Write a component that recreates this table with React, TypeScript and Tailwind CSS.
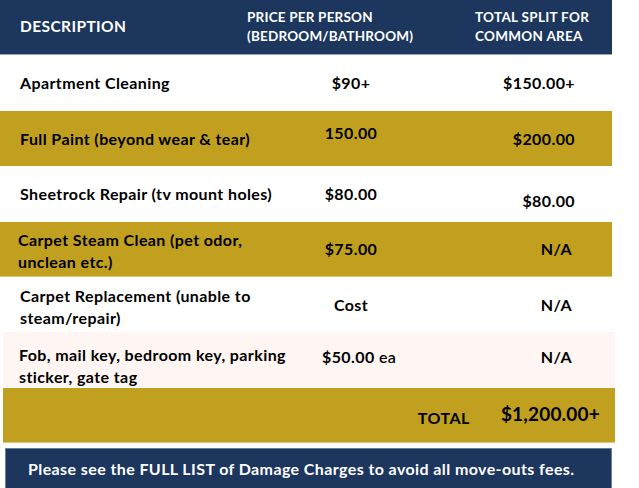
const rows = [
  { desc: ["Apartment Cleaning"], price: "$90+", total: "$150.00+", bg: "bg-white", h: "h-[56px]", descMt: "" },
  { desc: ["Full Paint (beyond wear & tear)"], price: "150.00", total: "$200.00", bg: "bg-[#c1a01f]", h: "h-[55px]", priceUp: true, descMt: "" },
  { desc: ["Sheetrock Repair (tv mount holes)"], price: "$80.00", total: "$80.00", bg: "bg-white", h: "h-[56px]", totalDown: true, descMt: "" },
  { desc: ["Carpet Steam Clean (pet odor,", "unclean etc.)"], price: "$75.00", total: "N/A", bg: "bg-[#c1a01f] border-b border-[#dcc772]", h: "h-[55px]", descLeft: true, descMt: "mt-[3px]" },
  { desc: ["Carpet Replacement (unable to", "steam/repair)"], price: "Cost", total: "N/A", bg: "bg-white", h: "h-[55px]", descMt: "mt-[5px]" },
];

export default function App() {
  return (
    <div className="w-[639px] h-[488px] bg-white overflow-hidden font-['Lato',sans-serif] font-bold text-black">
      {/* header */}
      <div className="w-[612px] h-[55px] bg-[#1c365d] border-b border-[#9aa2ad] flex items-center text-white">
        <div className="w-[247px] pl-[20px] text-[15.5px] tracking-[0.4px]">DESCRIPTION</div>
        <div className="w-[228px] text-[13.5px] leading-[19px] tracking-[0.2px]">
          <div>PRICE PER PERSON</div>
          <div>(BEDROOM/BATHROOM)</div>
        </div>
        <div className="text-[13.5px] leading-[19px] tracking-[0.3px]">
          <div>TOTAL SPLIT FOR</div>
          <div>COMMON AREA</div>
        </div>
      </div>

      {rows.map((r, i) => (
        <div key={i} className={`w-[612px] ${r.h} ${r.bg} flex items-center text-[16px] tracking-[0.4px]`}>
          <div className={`w-[290px] ${r.descLeft ? "pl-[18px]" : "pl-[20px]"} leading-[22px] ${r.descMt}`}>
            {r.desc.map((l) => (
              <div key={l} className="whitespace-nowrap">{l}</div>
            ))}
          </div>
          <div className={`w-[122px] text-center ${r.priceUp ? "-mt-[12px]" : ""}`}>{r.price}</div>
          <div className={`flex-1 text-right ${r.totalDown ? "mt-[14px]" : ""} ${r.total === "N/A" ? "pr-[40px]" : "pr-[37px]"}`}>
            {r.total}
          </div>
        </div>
      ))}

      {/* keys row */}
      <div className="ml-[3px] w-[612px] h-[55px] bg-[#fff5f3] flex items-center text-[16px] tracking-[0.4px]">
        <div className="w-[300px] pl-[16px] leading-[22px] mt-[12px] whitespace-nowrap">
          <div>Fob, mail key, bedroom key, parking</div>
          <div>sticker, gate tag</div>
        </div>
        <div className="w-[140px] pl-[19px] -mt-[6px]">
          $50.00 <span className="font-semibold">ea</span>
        </div>
        <div className="flex-1 text-right pr-[43px] -mt-[6px]">N/A</div>
      </div>

      {/* total */}
      <div className="ml-[3px] mt-[1px] w-[612px] h-[55px] bg-[#c1a01f] border-b border-[#dcc772] flex items-center justify-end pr-[15px]">
        <div className="text-[16px] tracking-[0.5px] mt-[6px] mr-[31px]">TOTAL</div>
        <div className="text-[19px] tracking-[0.2px] -mt-[1px]">$1,200.00+</div>
      </div>

      {/* banner */}
      <div className="ml-[5px] mt-[5px] w-[607px] h-[42px] bg-[#1c365d] border border-[#6b7f9c] flex items-center pl-[22px] text-white text-[16px] tracking-[0.4px] whitespace-nowrap">
        Please see the FULL LIST of Damage Charges to avoid all move-outs fees.
      </div>
    </div>
  );
}
